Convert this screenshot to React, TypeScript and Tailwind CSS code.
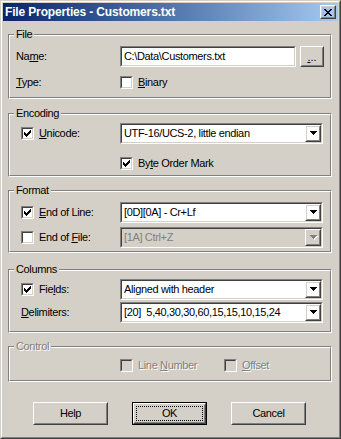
import React from 'react';

const sunkOuter = 'border border-t-[#808080] border-l-[#808080] border-b-white border-r-white';
const sunkInner = 'border border-t-[#404040] border-l-[#404040] border-b-[#d4d0c8] border-r-[#d4d0c8]';
const raisedOuter = 'border border-t-white border-l-white border-b-[#404040] border-r-[#404040]';
const raisedInner = 'border border-t-[#d4d0c8] border-l-[#d4d0c8] border-b-[#808080] border-r-[#808080]';
const disabledText = 'text-[#808080] [text-shadow:1px_1px_0_#ffffff]';

function CheckMark() {
  return (
    <svg width="7" height="7" viewBox="0 0 7 7" shapeRendering="crispEdges">
      <path
        d="M6 0h1v1H6zM5 1h2v1H5zM0 2h1v1H0zM4 2h3v1H4zM0 3h2v1H0zM3 3h3v1H3zM0 4h5v1H0zM1 5h3v1H1zM2 6h1v1H2z"
        fill="#000"
      />
    </svg>
  );
}

function Checkbox({ checked, disabled }: { checked?: boolean; disabled?: boolean }) {
  return (
    <div className={`w-[13px] h-[13px] shrink-0 ${sunkOuter}`}>
      <div
        className={`w-full h-full flex items-center justify-center ${sunkInner} ${
          disabled ? 'bg-[#d4d0c8]' : 'bg-white'
        }`}
      >
        {checked && <CheckMark />}
      </div>
    </div>
  );
}

function CheckLabel({
  checked,
  disabled,
  children,
}: {
  checked?: boolean;
  disabled?: boolean;
  children: React.ReactNode;
}) {
  return (
    <div className="flex items-center gap-[5px]">
      <Checkbox checked={checked} disabled={disabled} />
      <span className={`leading-[13px] ${disabled ? disabledText : ''}`}>{children}</span>
    </div>
  );
}

function Arrow({ disabled }: { disabled?: boolean }) {
  return (
    <svg width="8" height="5" viewBox="0 0 8 5" shapeRendering="crispEdges">
      {disabled && <path d="M1 1h7v1H1zM2 2h5v1H2zM3 3h3v1H3zM4 4h1v1H4z" fill="#fff" />}
      <path
        d="M0 0h7v1H0zM1 1h5v1H1zM2 2h3v1H2zM3 3h1v1H3z"
        fill={disabled ? '#808080' : '#000'}
      />
    </svg>
  );
}

function Combo({ value, disabled }: { value: string; disabled?: boolean }) {
  return (
    <div className={`w-[203px] h-[21px] ${sunkOuter}`}>
      <div className={`h-full flex items-center ${sunkInner} ${disabled ? 'bg-[#d4d0c8]' : 'bg-white'}`}>
        <span
          className={`flex-1 pl-[2px] leading-[13px] whitespace-pre overflow-hidden ${
            disabled ? 'text-[#808080]' : ''
          }`}
        >
          {value}
        </span>
        <div className={`w-[16px] h-[17px] ${raisedOuter}`}>
          <div className={`w-full h-full flex items-center justify-center pl-[1px] ${raisedInner}`}>
            <Arrow disabled={disabled} />
          </div>
        </div>
      </div>
    </div>
  );
}

function Group({
  label,
  className,
  disabled,
  children,
}: {
  label: string;
  className: string;
  disabled?: boolean;
  children: React.ReactNode;
}) {
  return (
    <div
      className={`relative w-[324px] border border-t-[#808080] border-l-[#808080] border-b-white border-r-white ${className}`}
    >
      <div className="h-full border border-t-white border-l-white border-b-[#808080] border-r-[#808080]">
        {children}
      </div>
      <span
        className={`absolute left-[5px] top-[-7px] px-[2px] bg-[#d4d0c8] leading-[13px] ${
          disabled ? disabledText : ''
        }`}
      >
        {label}
      </span>
    </div>
  );
}

function PushButton({ children, isDefault }: { children: React.ReactNode; isDefault?: boolean }) {
  if (isDefault) {
    return (
      <div className="w-[75px] h-[23px] border border-black">
        <div className={`h-full ${raisedOuter}`}>
          <div className={`h-full p-px ${raisedInner}`}>
            <div className="h-full border border-dotted border-black flex items-center justify-center">
              {children}
            </div>
          </div>
        </div>
      </div>
    );
  }
  return (
    <div className={`w-[75px] h-[23px] ${raisedOuter}`}>
      <div className={`h-full flex items-center justify-center ${raisedInner}`}>{children}</div>
    </div>
  );
}

export default function App() {
  return (
    <div className="w-[341px] h-[439px] font-['Liberation_Sans',Arial,sans-serif] text-[11px] tracking-[-0.35px] text-black select-none">
      <div className="w-full h-full border border-t-[#d4d0c8] border-l-[#d4d0c8] border-b-[#404040] border-r-[#404040]">
        <div className="w-full h-full flex flex-col p-px bg-[#d4d0c8] border border-t-white border-l-white border-b-[#808080] border-r-[#808080]">
          {/* title bar */}
          <div className="h-[18px] shrink-0 flex items-center justify-between pl-[2px] pr-[2px] bg-linear-to-r from-[#0a246a] to-[#a6caf0]">
            <span className="text-white font-bold text-[12px] tracking-[-0.15px] leading-[14px]">
              File Properties - Customers.txt
            </span>
            <div className={`w-[16px] h-[14px] ${raisedOuter}`}>
              <div className={`w-full h-full flex items-center justify-center ${raisedInner}`}>
                <svg width="8" height="7" viewBox="0 0 8 7" shapeRendering="crispEdges">
                  <path
                    d="M0 0h2v1H0zM6 0h2v1H6zM1 1h2v1H1zM5 1h2v1H5zM2 2h4v1H2zM3 3h2v1H3zM2 4h4v1H2zM1 5h2v1H1zM5 5h2v1H5zM0 6h2v1H0zM6 6h2v1H6z"
                    fill="#000"
                  />
                </svg>
              </div>
            </div>
          </div>

          <div className="pl-[5px] flex flex-col">
            <Group label="File" className="mt-[13px] h-[65px]">
              <div className="pt-[10px]">
                <div className="flex items-center h-[21px]">
                  <div className="w-[110px] pl-[6px] leading-[13px]">
                    Na<u>m</u>e:
                  </div>
                  <div className={`w-[176px] h-[21px] ${sunkOuter}`}>
                    <div className={`h-full flex items-center bg-white pl-[2px] ${sunkInner}`}>
                      <span className="leading-[13px]">C:\Data\Customers.txt</span>
                    </div>
                  </div>
                  <div className={`ml-[4px] w-[24px] h-[21px] ${raisedOuter}`}>
                    <div className={`h-full flex items-center justify-center pt-[2px] ${raisedInner}`}>
                      <span className="leading-[13px] tracking-[0px]">
                        <u>.</u>..
                      </span>
                    </div>
                  </div>
                </div>
                <div className="flex items-center h-[21px] mt-[5px]">
                  <div className="w-[110px] pl-[6px] leading-[13px]">
                    <u>T</u>ype:
                  </div>
                  <CheckLabel>
                    <u>B</u>inary
                  </CheckLabel>
                </div>
              </div>
            </Group>

            <Group label="Encoding" className="mt-[14px] h-[64px]">
              <div className="pt-[8px]">
                <div className="flex items-center h-[21px]">
                  <div className="w-[110px] pl-[11px]">
                    <CheckLabel checked>
                      <u>U</u>nicode:
                    </CheckLabel>
                  </div>
                  <Combo value="UTF-16/UCS-2, little endian" />
                </div>
                <div className="flex items-center h-[21px] mt-[9px] pl-[110px]">
                  <CheckLabel checked>
                    By<u>t</u>e Order Mark
                  </CheckLabel>
                </div>
              </div>
            </Group>

            <Group label="Format" className="mt-[13px] h-[63px]">
              <div className="pt-[10px]">
                <div className="flex items-center h-[21px]">
                  <div className="w-[110px] pl-[11px]">
                    <CheckLabel checked>
                      <u>E</u>nd of Line:
                    </CheckLabel>
                  </div>
                  <Combo value="[0D][0A] - Cr+Lf" />
                </div>
                <div className="flex items-center h-[21px] mt-[4px]">
                  <div className="w-[110px] pl-[11px]">
                    <CheckLabel>
                      End of <u>F</u>ile:
                    </CheckLabel>
                  </div>
                  <Combo value="[1A] Ctrl+Z" disabled />
                </div>
              </div>
            </Group>

            <Group label="Columns" className="mt-[16px] h-[64px]">
              <div className="pt-[8px]">
                <div className="flex items-center h-[21px]">
                  <div className="w-[110px] pl-[11px]">
                    <CheckLabel checked>
                      Fie<u>l</u>ds:
                    </CheckLabel>
                  </div>
                  <Combo value="Aligned with header" />
                </div>
                <div className="flex items-center h-[21px] mt-[2px]">
                  <div className="w-[110px] pl-[11px] leading-[13px]">
                    <u>D</u>elimiters:
                  </div>
                  <Combo value="[20]  5,40,30,30,60,15,15,10,15,24" />
                </div>
              </div>
            </Group>

            <Group label="Control" className="mt-[13px] h-[36px]" disabled>
              <div className="pt-[7px]">
                <div className="flex items-center h-[21px] pl-[110px]">
                  <div className="w-[104px]">
                    <CheckLabel disabled>
                      Line <u>N</u>umber
                    </CheckLabel>
                  </div>
                  <CheckLabel disabled>
                    <u>O</u>ffset
                  </CheckLabel>
                </div>
              </div>
            </Group>
          </div>

          <div className="mt-[20px] pl-[30px] flex gap-[24px]">
            <PushButton>Help</PushButton>
            <PushButton isDefault>OK</PushButton>
            <PushButton>Cancel</PushButton>
          </div>
        </div>
      </div>
    </div>
  );
}
